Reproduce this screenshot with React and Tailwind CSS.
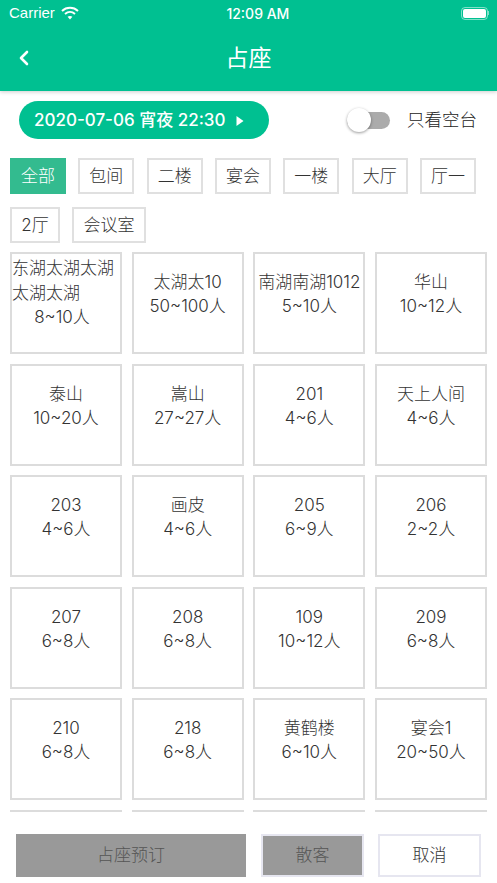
import React from 'react';
import { ChevronLeft } from 'lucide-react';

const FONT = { fontFamily: 'Inter, "Noto Sans CJK SC", "Noto Sans", sans-serif' };

const FILTERS = ['全部', '包间', '二楼', '宴会', '一楼', '大厅', '厅一'];

const ROOMS = [
    { name: '东湖太湖太湖太湖太湖', size: '8~10人', long: true },
    { name: '太湖太10', size: '50~100人' },
    { name: '南湖南湖1012', size: '5~10人' },
    { name: '华山', size: '10~12人' },
    { name: '泰山', size: '10~20人' },
    { name: '嵩山', size: '27~27人' },
    { name: '201', size: '4~6人' },
    { name: '天上人间', size: '4~6人' },
    { name: '203', size: '4~6人' },
    { name: '画皮', size: '4~6人' },
    { name: '205', size: '6~9人' },
    { name: '206', size: '2~2人' },
    { name: '207', size: '6~8人' },
    { name: '208', size: '6~8人' },
    { name: '109', size: '10~12人' },
    { name: '209', size: '6~8人' },
    { name: '210', size: '6~8人' },
    { name: '218', size: '6~8人' },
    { name: '黄鹤楼', size: '6~10人' },
    { name: '宴会1', size: '20~50人' },
    { name: '', size: '' },
    { name: '', size: '' },
    { name: '', size: '' },
    { name: '', size: '' },
];

const Chip = ({ label, active, className = 'w-14' }) => (
    <div
        className={`h-9 pt-px flex items-center justify-center text-[17px] font-light border-2 ${className} ${active
            ? 'bg-[#33bb8f] border-[#33bb8f] text-white'
            : 'bg-white border-[#e0e0e0] text-[#333333]'
            }`}
    >
        {label}
    </div>
);

const RoomCard = ({ room }) => (
    <div className="h-[102px] border-2 border-[#dcdcdc] text-[#333333] text-[17px] font-light text-center">
        {room.long ? (
            <div className="pt-[2px] leading-[24.5px]">
                <div className="text-left">{room.name}</div>
                <div className="pr-2">{room.size}</div>
            </div>
        ) : (
            <div className="pt-[16px] leading-[24px]">
                <div className="whitespace-nowrap">{room.name}</div>
                <div className="whitespace-nowrap">{room.size}</div>
            </div>
        )}
    </div>
);

const App = () => {
    return (
        <div className="w-[497px] h-[883px] flex flex-col bg-white overflow-hidden" style={FONT}>
            <header className="h-[91px] shrink-0 bg-[#00c091] text-white shadow-[0_1px_4px_rgba(0,0,0,0.2)] z-10">
                <div className="h-[26px] flex items-center justify-between pl-[9px] pr-2 text-[15px]">
                    <div className="flex items-center gap-[6px]">
                        <span style={{ fontFamily: '"Liberation Sans", sans-serif' }}>Carrier</span>
                        <svg width="18" height="14" viewBox="0 0 18 14" fill="none" stroke="white" strokeWidth="2">
                            <path d="M1 5 C5.5 0.8 12.5 0.8 17 5" />
                            <path d="M4 8 C7 5.4 11 5.4 14 8" />
                            <path d="M9 13.5 L6.6 10.8 C8 9.8 10 9.8 11.4 10.8 Z" fill="white" stroke="none" />
                        </svg>
                    </div>
                    <span className="font-medium text-[14px] -ml-6">12:09 AM</span>
                    <div className="flex items-center">
                        <div className="w-[27px] h-[13px] rounded-[4px] border border-white/50 p-px">
                            <div className="w-full h-full rounded-[2px] bg-white" />
                        </div>
                        <div className="w-px h-1 bg-white/50" />
                    </div>
                </div>
                <div className="relative h-[65px] flex items-center justify-center">
                    <ChevronLeft className="absolute left-[12px] top-[20px]" size={24} strokeWidth={2.6} />
                    <span className="text-[23px]">占座</span>
                </div>
            </header>

            <div className="flex items-center justify-between pt-[10px] pl-[19px] pr-[20px] h-[48px] shrink-0">
                <div className="w-[250px] h-[38px] pl-[15px] pt-[2px] rounded-full bg-[#00c091] text-white flex items-center gap-[11px] text-[17px] font-medium">
                    <span className="whitespace-nowrap">2020-07-06 宵夜 22:30</span>
                    <svg width="8" height="10" viewBox="0 0 8 10" fill="white">
                        <path d="M0.5 0 L7.5 5 L0.5 10 Z" />
                    </svg>
                </div>
                <div className="flex items-center gap-[17px]">
                    <div className="relative w-[43px] h-[17px] rounded-full bg-[#ababab]">
                        <div className="absolute left-0 -top-1 w-6 h-6 rounded-full bg-white shadow-[0_1px_3px_rgba(0,0,0,0.4)]" />
                    </div>
                    <span className="text-[17.5px] font-light text-[#222222]">只看空台</span>
                </div>
            </div>

            <div className="px-[10px] pt-[19px] shrink-0">
                <div className="flex justify-between w-[466px]">
                    {FILTERS.map((f, i) => (
                        <Chip key={f} label={f} active={i === 0} />
                    ))}
                </div>
                <div className="flex gap-3 mt-[13px]">
                    <Chip label="2厅" className="w-[50px]" />
                    <Chip label="会议室" className="w-[74px]" />
                </div>
            </div>

            <div className="h-[560px] shrink-0 overflow-hidden mt-[9px] px-[10px]">
                <div className="grid grid-cols-4 gap-x-[9.67px] gap-y-[9.6px]">
                    {ROOMS.map((room, i) => (
                        <RoomCard key={i} room={room} />
                    ))}
                </div>
            </div>

            <div className="flex items-start pt-[22px] pl-4 bg-white">
                <div className="w-[230px] h-[43px] bg-[#999999] text-[#555555] text-[17px] font-light flex items-center justify-center">
                    占座预订
                </div>
                <div className="w-[103px] h-[43px] ml-[15px] bg-[#999999] border-2 border-[#e6e6f0] text-[#555555] text-[17px] font-light flex items-center justify-center">
                    散客
                </div>
                <div className="w-[103px] h-[43px] ml-[14px] bg-white border-2 border-[#e6e6f0] text-[#333333] text-[17px] font-light flex items-center justify-center">
                    取消
                </div>
            </div>
        </div>
    );
};

export default App;
